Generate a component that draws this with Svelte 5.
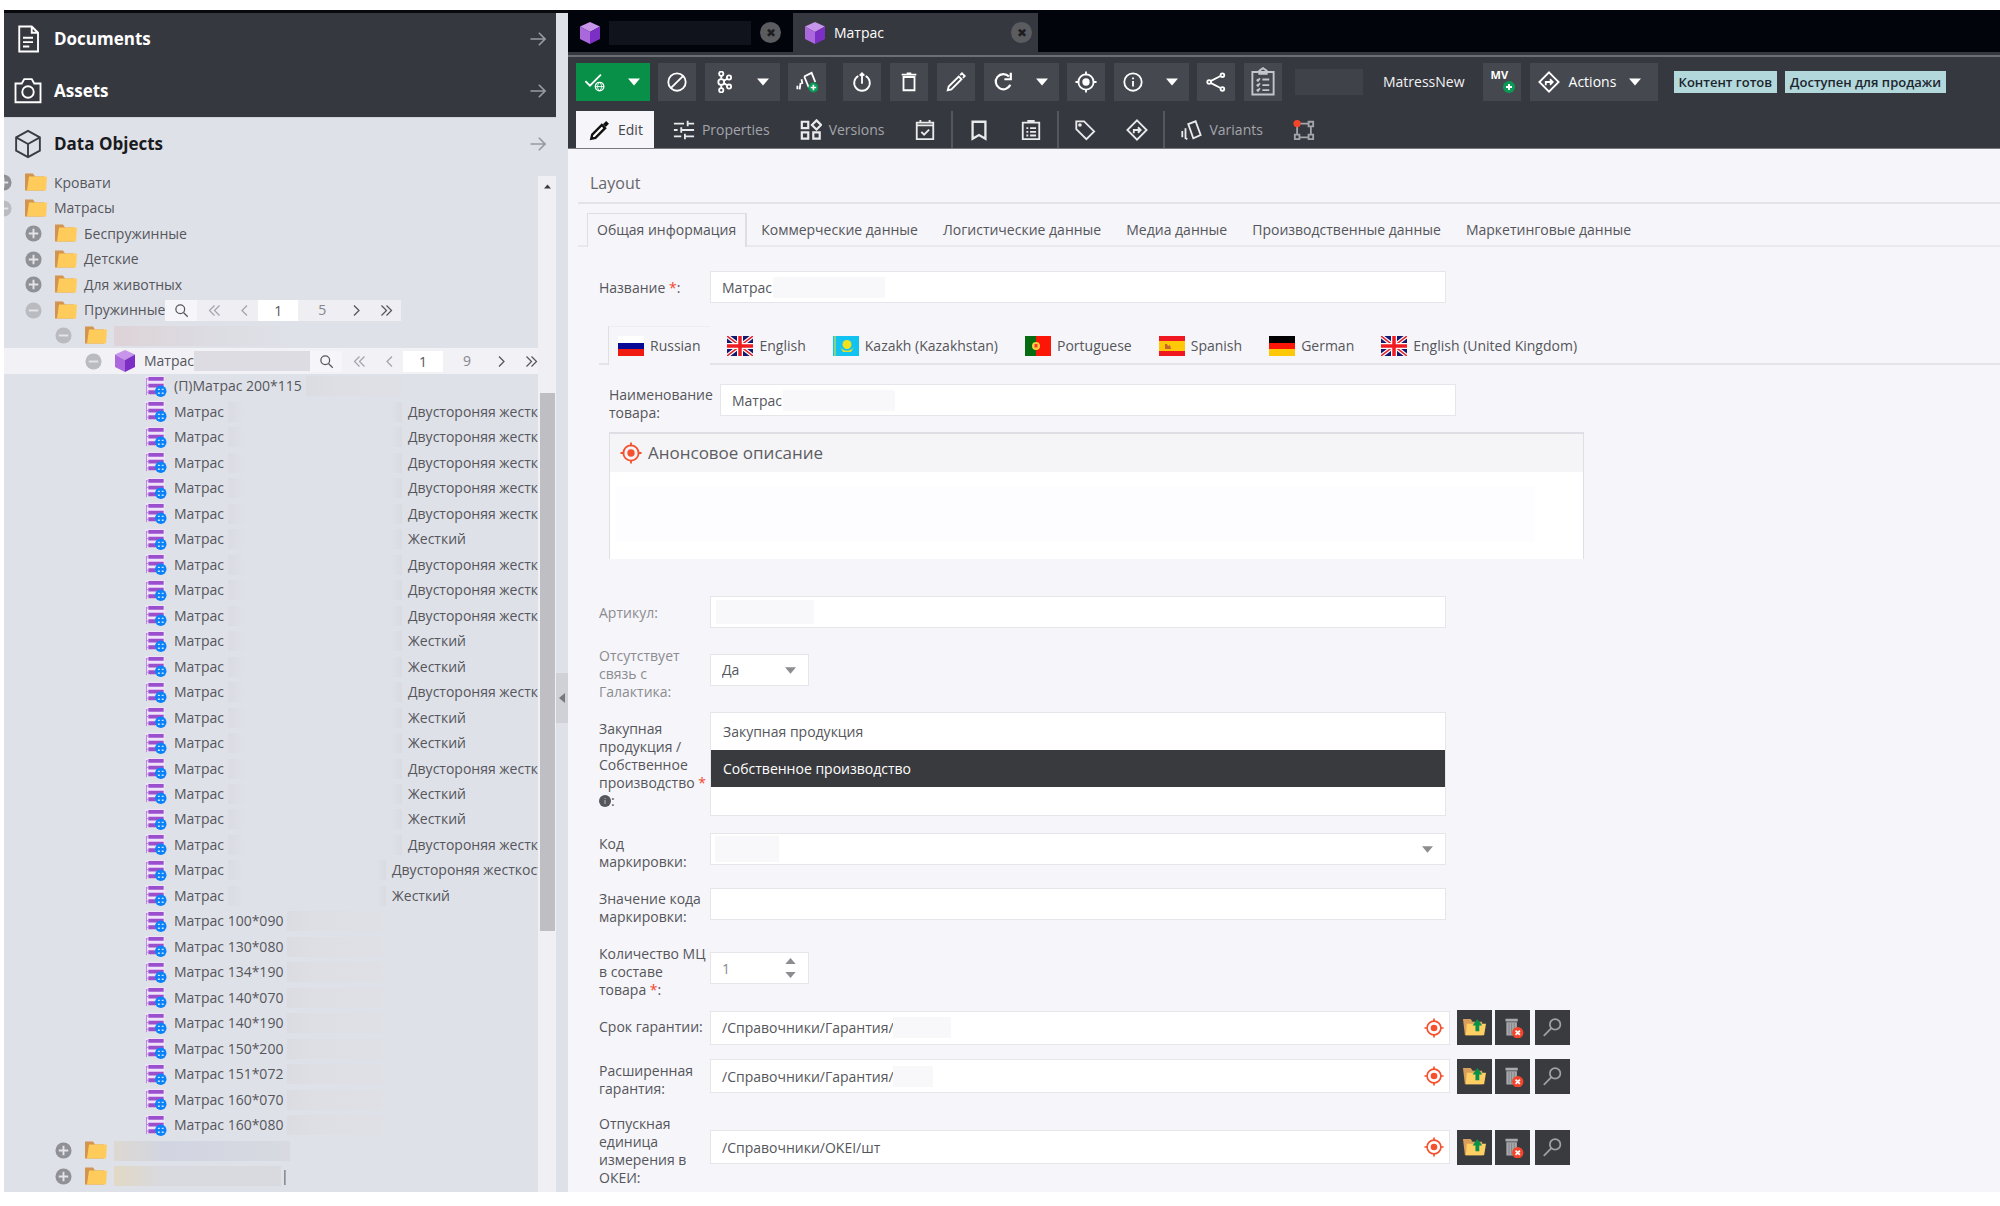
<script>
  const icons = {
    doc: '<path d="M5 2h10l5 5v15H5zM15 2v5h5M8 11h8M8 14.500h8M8 18h5" />',
    camera: '<path d="M2 6h5l2-3.500h6L17 6h5v15H2z"/><circle cx="12" cy="12.800" r="4.600"/>',
    cube: '<path d="M12 1.500l9.500 5.200v10.600L12 22.500l-9.500-5.200V6.700zM2.500 6.700L12 12l9.500-5.300M12 12v10.500"/>',
    arrow: '<path d="M3 12h17M13 4.500l7.500 7.500-7.500 7.500"/>',
    check: '<path d="M1.500 11l5 5L18.500 4"/><circle cx="17" cy="17" r="4.600" stroke-width="1.500"/><path d="M12.500 17h9M17 12.500c-3 3-3 6 0 9c3-3 3-6 0-9" stroke-width="1"/>',
    block: '<circle cx="12" cy="12" r="9.500"/><path d="M5.500 18.500l13-13"/>',
    kafka: '<circle cx="9" cy="12" r="3.200"/><circle cx="9" cy="3" r="2.300"/><circle cx="9" cy="21" r="2.300"/><circle cx="17.500" cy="7" r="2.300"/><circle cx="17.500" cy="17" r="2.300"/><path d="M9 5.500v3M9 15v3.500M12 10.500l3.500-2M12 13.500l3.500 2"/>',
    variantAdd: '<path d="M9 6l8-4 4 10M9 6l5 12M6 9l1 5M5 13l-1 7M1.500 16v4" /><circle cx="19" cy="18" r="5.500" fill="#0a9a55" stroke="none"/><path d="M19 15v6M16 18h6" stroke-width="1.800"/>',
    power: '<path d="M8 5.500a8.500 8.500 0 1 0 8 0" /><path d="M12 14V2.500M9.500 5L12 2.500 14.500 5"/>',
    trash: '<path d="M6 6.500h12V21H6zM4 4h16M9.500 2.500h5" />',
    pencil: '<path d="M3 21l1-4L15 6l3 3L7 20zM16.500 4.500l2-2 3 3-2 2"/>',
    pencilFill: '<path d="M2.500 21.500l1-4.500L14 6.500l3.500 3.500L7 20.500z" fill="#fff" stroke-width="2.600"/><path d="M17 4l3 3" stroke-width="5"/>',
    reload: '<path d="M18.500 6A8.300 8.300 0 1 0 20 15M20.500 2v7h-7" stroke-width="2.400"/>',
    target: '<circle cx="12" cy="12" r="8.300"/><circle cx="12" cy="12" r="4" fill="currentColor" stroke="none"/><path d="M12 .500v4M12 19.500v4M.500 12h4M19.500 12h4"/>',
    info: '<circle cx="12" cy="12" r="9.500"/><path d="M12 11v6M12 7v2"/>',
    share: '<circle cx="19" cy="4.500" r="2"/><circle cx="19" cy="19.500" r="2"/><circle cx="4.500" cy="12" r="2"/><path d="M6 11l11-5.500M6 13l11 5.500"/>',
    clip: '<path d="M3.500 4h17v18h-17zM9 5.500V3l3-2 3 2v2.500zM7 10l1 1 1.500-2M7 14l1 1 1.500-2M7 18l1 1 1.500-2M11.500 10H17M11.500 14.500H17M11.500 18.500H17"/>',
    route: '<path d="M12 1.500L22.500 12 12 22.500 1.500 12zM8.500 15.500V12h7M13 9l3 3-3 3"/>',
    tune: '<path d="M1 5h11M16 5h7M16 2v6M1 12h4M9 12h14M9 9v6M1 19h8M13 19h10M13 16v6"/>',
    widgets: '<path d="M2 3h7v7H2zM2 14.500h7v7H2zM14.500 14.500h7v7h-7zM18 1.500l5 5-5 5-5-5z" stroke-width="2.400"/>',
    calendar: '<path d="M3 4h18v18H3zM3 7h18M7 1v3M17 1v3M8 14l3 3 5.500-5.500"/>',
    bookmark: '<path d="M5 3h14v18.500l-7-4-7 4z" stroke-width="2.500"/>',
    clipboard: '<path d="M3 4h18v18H3zM9 4V2h6v2M7 10h2M11 10h6.500M7 14h2M11 14h6.500M7 18h2M11 18h6.500"/>',
    tag: '<path d="M2.500 2.500H11L22 13.500 13.500 22 2.500 11z"/><circle cx="6.500" cy="6.500" r="1"/>',
    variants: '<path d="M9 5.500L17 2.500l5.500 15L14.500 21zM6 10v11l2 1M2.500 13v7" />',
    nodes: '<path d="M7 5h10M7 20h10M4.500 7.500v10M19.500 7.500v10" /><path d="M17 3h5v5h-5zM17 17h5v5h-5zM2 17h5v5H2z"/><circle cx="4.500" cy="5" r="4" fill="#f4452b" stroke="none"/>',
    search: '<circle cx="10" cy="10" r="7"/><path d="M15.500 15.500L22 22"/>',
    searchLeft: '<circle cx="15" cy="8.500" r="6"/><path d="M10.500 13L2 21.500"/>',
    dleft: '<path d="M12 4l-8 8 8 8M20 4l-8 8 8 8"/>',
    left: '<path d="M16 4l-8 8 8 8"/>',
    right: '<path d="M8 4l8 8-8 8"/>',
    dright: '<path d="M4 4l8 8-8 8M12 4l8 8-8 8"/>',
  };

  const leaf = (name, tail = '', w = 234) => ({ level: 4, kind: 'leaf', name, tail, w });
  const two = 'Двустороняя жесткость';
  const hard = 'Жесткий';
  const rows = [
    { level: 0, kind: 'folder', exp: 'plus', name: 'Кровати' },
    { level: 0, kind: 'folder', exp: 'minus', name: 'Матрасы' },
    { level: 1, kind: 'folder', exp: 'plus', name: 'Беспружинные' },
    { level: 1, kind: 'folder', exp: 'plus', name: 'Детские' },
    { level: 1, kind: 'folder', exp: 'plus', name: 'Для животных' },
    { level: 1, kind: 'folder', exp: 'minus', name: 'Пружинные', pages: 5 },
    { level: 2, kind: 'folder', exp: 'minus', name: '', smudge: 'rose' },
    { level: 3, kind: 'cube', exp: 'minus', name: 'Матрас', pages: 9, selected: true },
    leaf('(П)Матрас 200*115'),
    ...[two, two, two, two, two, hard, two, two, two, hard, hard, two, hard, hard, two, hard, hard, two].map((t) => leaf('Матрас', t)),
    leaf('Матрас', two, 218),
    leaf('Матрас', hard, 218),
    ...['100*090', '130*080', '134*190', '140*070', '140*190', '150*200', '151*072', '160*070', '160*080'].map((s) => leaf('Матрас ' + s)),
    { level: 2, kind: 'folder', exp: 'plus', name: '', smudge: 'blue' },
    { level: 2, kind: 'folder', exp: 'plus', name: '', smudge: 'sand' },
  ];

  const formTabs = ['Общая информация', 'Коммерческие данные', 'Логистические данные', 'Медиа данные', 'Производственные данные', 'Маркетинговые данные'];

  const uk = '<path fill="#15186f" d="M0 0h26v20H0z"/><path d="M0 0l26 20M26 0L0 20" stroke="#fff" stroke-width="4"/><path d="M0 0l26 20M26 0L0 20" stroke="#e0242c" stroke-width="1.500"/><path d="M13 0v20M0 10h26" stroke="#fff" stroke-width="6"/><path d="M13 0v20M0 10h26" stroke="#f01c22" stroke-width="3.500"/>';
  const langs = [
    ['Russian', '<path fill="#fff" d="M0 0h26v7H0z"/><path fill="#060a96" d="M0 7h26v6H0z"/><path fill="#f01a10" d="M0 13h26v7H0z"/>'],
    ['English', uk],
    ['Kazakh (Kazakhstan)', '<path fill="#12c3f2" d="M0 0h26v20H0z"/><path fill="#7fd68a" d="M1 0h2v20H1z"/><circle cx="14" cy="8.500" r="4.500" fill="#f2e21c"/><path d="M7 11c4 5 10 5 14 0l-3 5h-8z" fill="#e6dc2a"/>'],
    ['Portuguese', '<path fill="#076b12" d="M0 0h11v20H0z"/><path fill="#fb1608" d="M11 0h15v20H11z"/><circle cx="11" cy="10" r="4" fill="#f3d33c"/><path fill="#f33" d="M9.500 8h3v3.500h-3z"/>'],
    ['Spanish', '<path fill="#f01820" d="M0 0h26v20H0z"/><path fill="#fec707" d="M0 5h26v10H0z"/><path fill="#c5662a" d="M6 8h2l1 2 2-1 1 4H6z"/>'],
    ['German', '<path d="M0 0h26v7H0z"/><path fill="#fb1608" d="M0 7h26v6H0z"/><path fill="#fec707" d="M0 13h26v7H0z"/>'],
    ['English (United Kingdom)', uk],
  ];
</script>

{#snippet icon(name, size = 'm')}
  <svg class="ico {size}" viewBox="0 0 24 24" aria-hidden="true">{@html icons[name]}</svg>
{/snippet}

{#snippet cube()}
  <svg class="cube" viewBox="0 0 20 22" aria-hidden="true">
    <path d="M10 0l10 4.500L10 10 0 4.500z" fill="#c795ea" /><path d="M0 4.500L10 10v12L0 17z" fill="#ab68dc" /><path d="M20 4.500L10 10v12l10-5z" fill="#7b2fc4" />
  </svg>
{/snippet}

{#snippet folder()}
  <svg class="rowicon" viewBox="0 0 22 20" aria-hidden="true">
    <path d="M0 1h8l2 3h9v14H0z" fill="#d2944e" /><path d="M4 4h18l-1 14H2z" fill="#ffcc5c" />
  </svg>
{/snippet}

{#snippet leafIcon()}
  <svg class="rowicon" viewBox="0 0 22 22" aria-hidden="true">
    <path d="M0 0h20v19H0z" fill="#efe2fa" /><path d="M3 1h16v4H3zM3 8h16v4H3zM3 15h16v4H3z" fill="#9a50cc" /><path d="M1 2v18M1 3h2M1 10h2M1 17h2" stroke="#b582dc" />
    <circle cx="16" cy="16" r="6" fill="#0a83fa" /><path d="M13 14h2M17 14h2M13 18h2M17 18h2" stroke="#cfe6ff" stroke-width="1.500" />
  </svg>
{/snippet}

{#snippet caret(up = false)}
  <svg class="caret" viewBox="0 0 12 7" aria-hidden="true"><path d={up ? 'M0 7h12L6 0z' : 'M0 0h12L6 7z'} fill="currentColor" /></svg>
{/snippet}

{#snippet tool(name, label)}
  <button class="tool" aria-label={label}>{@render icon(name)}</button>
{/snippet}

{#snippet split(name, label)}
  <div class="split">
    <button class="tool" aria-label={label}>{@render icon(name)}</button>
    <button class="drop" aria-label="{label} menu">{@render caret()}</button>
  </div>
{/snippet}

{#snippet relation(id, label, value, smudge)}
  <div class="field">
    <label for={id}>{label}</label>
    <div class="relation">
      <div class="refbox">
        <input {id} {value} />
        {#if smudge}<span class="smudge {smudge}"></span>{/if}
        <span class="red">{@render icon('target', 's')}</span>
      </div>
      <button type="button" class="sq" aria-label="Open">
        <svg viewBox="0 0 24 20" aria-hidden="true"><path d="M0 1h8l2 3h10v14H2z" fill="#d9a05c" /><path d="M4 6h20l-2 12H3z" fill="#ffcf63" /><path d="M13 14V8h-3l5-7 5 7h-3v6z" fill="#07914a" /></svg>
      </button>
      <button type="button" class="sq" aria-label="Delete">
        <svg viewBox="0 0 24 24" aria-hidden="true"><path d="M4 2h14v3H4zM5 6h12v15H5z" fill="#a9aaad" /><path d="M8 7v13M11 7v13M14 7v13" stroke="#7c7d81" /><circle cx="18" cy="18" r="6.500" fill="#f5462c" /><path d="M15.500 15.500l5 5M20.500 15.500l-5 5" stroke="#fff" stroke-width="2" /></svg>
      </button>
      <button type="button" class="sq last" aria-label="Search">{@render icon('searchLeft')}</button>
    </div>
  </div>
{/snippet}

<div class="app">
  <aside class="sidebar">
    <button class="section">{@render icon('doc', 'l')}<span>Documents</span>{@render icon('arrow', 'a')}</button>
    <button class="section">{@render icon('camera', 'l')}<span>Assets</span>{@render icon('arrow', 'a')}</button>
    <button class="section light">{@render icon('cube', 'l')}<span>Data Objects</span>{@render icon('arrow', 'a')}</button>
    <div class="treewrap">
      <div class="tree">
        {#each rows as r}
          <div class="row" class:selected={r.selected}>
            <span class="indent" style="margin-left: {r.level * 30 - 9}px">
              {#if r.exp}
                <svg class="exp {r.exp}" viewBox="0 0 18 18" aria-hidden="true">
                  <circle cx="9" cy="9" r="8.500" fill="currentColor" /><path d={r.exp === 'plus' ? 'M9 4v10M4 9h10' : 'M4 9h10'} stroke="#e4e4ea" stroke-width="2" />
                </svg>
              {/if}
            </span>
            <span class="kind">
              {#if r.kind === 'folder'}{@render folder()}{:else if r.kind === 'cube'}{@render cube()}{:else}{@render leafIcon()}{/if}
            </span>
            {#if r.tail}
              <span class="name" style="width: {r.w}px">{r.name}<i class="veil"></i></span><span>{r.tail}</span>
            {:else}
              <span>{r.name}</span>
            {/if}
            {#if r.smudge}<span class="rowsmudge {r.smudge}"></span>{/if}
            {#if r.smudge === 'sand'}<span class="bar">|</span>{/if}
            {#if r.kind === 'leaf' && !r.tail}<span class="fade"></span>{/if}
            {#if r.selected}<span class="selsmudge"></span>{/if}
            {#if r.pages}
              <div class="pager">
                <button class="find" aria-label="Search">{@render icon('search', 'p')}</button>
                <button class="first dim" aria-label="First">{@render icon('dleft', 'p')}</button>
                <button class="prev dim" aria-label="Previous">{@render icon('left', 'p')}</button>
                <input value="1" aria-label="Page" />
                <span class="total">{r.pages}</span>
                <button class="next" aria-label="Next">{@render icon('right', 'p')}</button>
                <button class="lastp" aria-label="Last">{@render icon('dright', 'p')}</button>
              </div>
            {/if}
          </div>
        {/each}
      </div>
      <div class="scroll"><span class="up">{@render caret(true)}</span><span class="thumb"></span></div>
    </div>
  </aside>

  <div class="splitter"><button aria-label="Collapse"><svg viewBox="0 0 6 10"><path d="M6 0v10L0 5z" fill="#77797f" /></svg></button></div>

  <main>
    <header>
      <div class="doctabs">
        <div class="doctab">{@render cube()}<span class="title hidden"></span><button aria-label="Close">✖</button></div>
        <div class="doctab on">{@render cube()}<span class="title">Матрас</span><button aria-label="Close">✖</button></div>
      </div>
      <div class="toolbar">
        <div class="split green">
          <button class="tool" aria-label="Save and publish">{@render icon('check')}</button>
          <button class="drop" aria-label="Save menu">{@render caret()}</button>
        </div>
        {@render tool('block', 'Unpublish')}
        {@render split('kafka', 'Send')}
        {@render tool('variantAdd', 'Add variant')}
        <span class="space"></span>
        {@render tool('power', 'Queue')}
        {@render tool('trash', 'Delete')}
        {@render tool('pencil', 'Rename')}
        {@render split('reload', 'Reload')}
        {@render tool('target', 'Locate')}
        {@render split('info', 'Info')}
        {@render tool('share', 'Share')}
        <button class="tool thin" aria-label="Checklist">{@render icon('clip', 'l')}</button>
        <span class="idsmudge"></span>
        <span class="cls">MatressNew</span>
        <button class="tool mv" aria-label="Add MV"><b>MV</b><svg viewBox="0 0 12 12"><circle cx="6" cy="6" r="6" fill="#0a9a55" /><path d="M6 3v6M3 6h6" stroke="#fff" stroke-width="2" /></svg></button>
        <button class="actions">{@render icon('route')}<span>Actions</span>{@render caret()}</button>
        <span class="badge lead">Контент готов</span>
        <span class="badge">Доступен для продажи</span>
      </div>
      <nav class="tabs">
        <button class="tab on">{@render icon('pencilFill')}<span>Edit</span></button>
        <button class="tab">{@render icon('tune')}<span>Properties</span></button>
        <button class="tab">{@render icon('widgets')}<span>Versions</span></button>
        <button class="tab" aria-label="Schedule">{@render icon('calendar')}</button>
        <span class="sep"></span>
        <button class="tab" aria-label="Bookmark">{@render icon('bookmark')}</button>
        <button class="tab" aria-label="Tasks">{@render icon('clipboard')}</button>
        <span class="sep"></span>
        <button class="tab" aria-label="Tags">{@render icon('tag')}</button>
        <button class="tab" aria-label="Workflow">{@render icon('route')}</button>
        <span class="sep"></span>
        <button class="tab">{@render icon('variants')}<span>Variants</span></button>
        <button class="tab grey" aria-label="Relations">{@render icon('nodes')}</button>
      </nav>
    </header>

    <div class="content">
      <h2>Layout</h2>
      <div class="formtabs">
        {#each formTabs as t, i}<button class:on={i === 0}>{t}</button>{/each}
      </div>
      <form>
        <div class="field">
          <label for="title">Название <em>*</em>:</label>
          <div class="box"><input id="title" value="Матрас" /><span class="smudge title"></span></div>
        </div>
        <div class="langs">
          {#each langs as [name, art], i}
            <button type="button" class:on={i === 0}><svg class="flag" viewBox="0 0 26 20" aria-hidden="true">{@html art}</svg>{name}</button>
          {/each}
        </div>
        <div class="localized">
          <div class="field">
            <label for="pname">Наименование товара:</label>
            <div class="box"><input id="pname" value="Матрас" /><span class="smudge title"></span></div>
          </div>
          <section class="panel">
            <h3><span class="red">{@render icon('target')}</span>Анонсовое описание</h3>
            <div class="rich"><div></div></div>
          </section>
        </div>
        <div class="fields">
          <div class="field muted">
            <label for="sku">Артикул:</label>
            <div class="box"><input id="sku" /><span class="smudge sku"></span></div>
          </div>
          <div class="field muted">
            <label for="link">Отсутствует связь с Галактика:</label>
            <div class="box small"><select id="link"><option>Да</option></select><span class="selcaret">{@render caret()}</span></div>
          </div>
          <div class="field">
            <label for="origin">Закупная продукция / Собственное производство&nbsp;<em>*</em> <svg class="dot" viewBox="0 0 12 12"><circle cx="6" cy="6" r="6" fill="#55565b" /><path d="M6 5v4M6 3v1" stroke="#bbb" /></svg>:</label>
            <div class="list" id="origin" role="listbox" tabindex="0">
              <div role="option" aria-selected="false">Закупная продукция</div>
              <div role="option" aria-selected="true" class="sel">Собственное производство</div>
            </div>
          </div>
          <div class="field">
            <label for="code">Код маркировки:</label>
            <div class="box"><select id="code"><option></option></select><span class="smudge code"></span><span class="selcaret">{@render caret()}</span></div>
          </div>
          <div class="field">
            <label for="codeval">Значение кода маркировки:</label>
            <div class="box"><input id="codeval" /></div>
          </div>
          <div class="field">
            <label for="qty">Количество МЦ в составе товара&nbsp;<em>*</em>:</label>
            <div class="box small"><input id="qty" value="1" class="qty" /><span class="spin">{@render caret(true)}{@render caret()}</span></div>
          </div>
          <div class="relations">
            {@render relation('warranty', 'Срок гарантии:', '/Справочники/Гарантия/', 'w1')}
            {@render relation('warranty2', 'Расширенная гарантия:', '/Справочники/Гарантия/', 'w2')}
            {@render relation('unit', 'Отпускная единица измерения в ОКЕИ:', '/Справочники/OKEI/шт', '')}
          </div>
        </div>
      </form>
    </div>
  </main>
</div>

<style>
  :global(body) { background: #fff; }
  .app, .app * { box-sizing: border-box; }
  .app { display: flex; min-height: 100vh; padding: 10px 0 14px 4px; font: 14px/18px "Open Sans", "Noto Sans", sans-serif; color: #55565b; }
  button { font: inherit; color: inherit; background: none; border: 0; padding: 0; margin: 0; display: flex; align-items: center; justify-content: center; white-space: nowrap; }
  input, select { font: inherit; color: #55565b; border: 0; background: none; margin: 0; outline: 0; appearance: none; }

  .ico { width: 22px; height: 22px; fill: none; stroke: currentColor; stroke-width: 2; flex: none; }
  .ico.s { width: 20px; height: 20px; }
  .ico.l { width: 30px; height: 32px; stroke-width: 1.5; }
  .ico.a { width: 20px; height: 20px; stroke-width: 2; color: #989aa0; margin-left: auto; }
  .ico.p { width: 15px; height: 15px; stroke-width: 2; }
  .caret { width: 12px; height: 8px; flex: none; }
  .cube { width: 20px; height: 22px; flex: none; }

  .sidebar { width: 552px; flex: none; display: flex; flex-direction: column; background: #dfe1e8; border-top: 3px solid #08090d; }
  .section { height: 52px; flex: none; background: #36383f; color: #fff; font-weight: 700; font-size: 17px; padding: 0 8px 0 9px; gap: 11px; justify-content: flex-start; }
  .section.light { background: none; color: #1a1b20; border-top: 1px solid #cfd2d8; }
  .section.light .ico.l { color: #3a3c42; }
  .treewrap { flex: 1; display: flex; }
  .tree { flex: 1; min-width: 0; overflow: hidden; display: flex; flex-direction: column; padding: 1px 0 3px; }
  .row { flex: 1; min-height: 25px; display: flex; align-items: center; white-space: nowrap; }
  .row.selected { background: #f1f1f6; }
  .indent { width: 30px; flex: none; display: flex; }
  .kind { width: 29px; flex: none; display: flex; align-items: center; }
  .rowicon { width: 22px; height: 21px; }
  .exp { width: 17px; height: 17px; color: #8f9196; }
  .exp.minus { color: #b9bbc0; }
  .name { flex: none; display: flex; align-items: center; }
  .veil { flex: 1; height: 20px; margin: 0 6px 0 4px; background: linear-gradient(90deg, #dadce2, #dfe1e8 10%, #dfe1e8 94%, #d9dbe1); }
  .fade { width: 96px; height: 20px; margin-left: 4px; background: linear-gradient(90deg, #dadce2, #dddfe5 30%, #dee0e6); }
  .rowsmudge { width: 176px; height: 20px; background: #d8dae0; }
  .rowsmudge.rose { background: linear-gradient(90deg, #ddd3d8, #dcdde3 60%, #dfe1e8); }
  .rowsmudge.blue { background: linear-gradient(90deg, #ddd8d2, #d1d5e2 30%, #d8dae0); }
  .rowsmudge.sand { width: 167px; background: linear-gradient(90deg, #e2d8c4, #d8dae0 30%); }
  .selsmudge { width: 116px; height: 20px; background: #dcdce2; flex: none; }
  .pager { display: flex; flex: none; align-items: center; height: 21px; background: #eeeef3; }
  .pager > * { flex: none; }
  .selected .pager { background: none; }
  .find { width: 32px; height: 21px; background: #f6f6fa; }
  .first { width: 34px; }
  .prev { width: 27px; }
  .next { width: 29px; }
  .lastp { width: 30px; }
  .dim { color: #a4a5ab; }
  .pager input { width: 40px; height: 21px; text-align: center; background: #fff; padding: 0; }
  .total { width: 40px; margin-left: 4px; text-align: center; color: #85868c; }
  .scroll { width: 18px; flex: none; margin-top: 7px; background: #f0f0f4; display: flex; flex-direction: column; align-items: center; }
  .up { height: 20px; display: flex; align-items: center; color: #3b3c40; }
  .up .caret { width: 7px; height: 5px; }
  .thumb { width: 15px; height: 53%; margin-top: 197px; background: #bfbfc3; }

  .splitter { width: 12px; flex: none; background: #dfe1e8; border-top: 3px solid #08090d; display: flex; align-items: center; }
  .splitter button { width: 12px; height: 50px; margin-top: 190px; background: #cfd1d7; }
  .splitter svg { width: 6px; height: 10px; }

  main { flex: 1; min-width: 0; background: #f6f5f9; }
  header { background: #36383f; border-bottom: 1px solid #77797f; }
  .doctabs { height: 42px; background: #02040c; display: flex; padding-top: 3px; }
  .doctab { width: 225px; display: flex; align-items: center; padding: 0 12px; gap: 9px; color: #fff; }
  .doctab.on { width: 245px; background: #36383f; padding-right: 6px; }
  .doctab button { width: 21px; height: 21px; border-radius: 50%; background: #5b5c60; color: #1d1e22; font-size: 12px; margin-left: auto; }
  .title.hidden { width: 142px; height: 24px; background: #10131b; }
  .toolbar { border-top: 2px solid #6b6e75; margin-top: 3px; display: flex; align-items: center; gap: 8px; padding: 6px 8px 10px; color: #fff; }
  .tool { width: 38px; height: 38px; background: #45484f; flex: none; margin-right: 1px; }
  .split { width: 75px; flex: none; display: flex; background: #45484f; }
  .split .tool { margin: 0; }
  .drop { flex: 1; height: 38px; padding-left: 3px; }
  .green { width: 74px; }
  .green, .green .tool { background: #089048; }
  .thin { color: #c4c6cb; }
  .space { width: 0; }
  .idsmudge { width: 68px; height: 26px; margin-left: 4px; background: #3f4249; }
  .cls { margin: 0 10px 0 12px; color: #f2f2f4; }
  .mv { flex-direction: column; align-items: flex-start; padding: 0 0 2px 8px; font-size: 11px; line-height: 12px; }
  .mv svg { width: 12px; height: 12px; margin-left: 12px; }
  .actions { width: 128px; height: 38px; background: #45484f; gap: 9px; flex: none; justify-content: flex-start; padding-left: 8px; }
  .actions .caret { margin-left: 4px; }
  .badge { height: 22px; line-height: 22px; padding: 0 5px; background: #b2d8dc; color: #20242c; font-weight: 600; font-size: 13px; flex: none; white-space: nowrap; }
  .badge.lead { margin-left: 8px; }
  .tabs { display: flex; height: 37px; padding-left: 8px; color: #e9eaec; }
  .tab { padding: 0 15px; gap: 7px; }
  .tab span { color: #a3a5ab; }
  .tab.on { background: #f6f5f9; color: #111; padding: 0 11px 0 13px; margin-right: 4px; }
  .tab.on span { color: #44454b; }
  .tab.grey { color: #a3a5ab; }
  .sep { width: 2px; background: #54575e; }

  .content { padding-left: 10px; }
  h2 { margin: 0; font-weight: 400; font-size: 16px; line-height: 22px; padding: 23px 12px 8px; border-bottom: 2px solid #e4e3e8; color: #66676c; }
  .formtabs { display: flex; gap: 3px; margin-top: 9px; padding-left: 9px; height: 34px; border-bottom: 2px solid #e9e8ed; }
  .formtabs button { height: 32px; padding: 0 10px; border: solid transparent; border-width: 1px 1px 0; }
  .formtabs button.on { height: 34px; padding: 0 9px 2px; background: #f6f5f9; border-color: #dfdee4; border-right-width: 2px; }
  form { padding: 24px 0 0 21px; }
  .field { display: grid; grid-template-columns: 111px 736px; }
  label { padding: 8px 2px 0 0; }
  em { color: #f4452b; font-style: normal; }
  .muted label { color: #8b8c91; }
  .box, .refbox, .list { align-self: center; background: #fff; border: 1px solid #e6e5ea; display: flex; align-items: center; height: 32px; position: relative; }
  .box input, .box select, .refbox input { flex: 1; width: 100%; height: 100%; padding: 0 11px; }
  .small { width: 99px; }
  .box select { padding-right: 20px; }
  .selcaret, .spin, .refbox .red { position: absolute; right: 12px; color: #8c8d91; display: flex; }
  .selcaret .caret { width: 11px; height: 7px; }
  .red { color: #f4512f; display: flex; }
  .refbox .red { right: 5px; color: #f4512f; }
  .spin { flex-direction: column; gap: 8px; }
  .spin .caret { height: 6px; width: 11px; }
  .qty { color: #88898e; }
  .smudge { position: absolute; height: 21px; background: #f8f7fa; left: 62px; }
  .smudge.title { width: 112px; }
  .smudge.sku { left: 5px; width: 98px; height: 24px; }
  .smudge.code { left: 4px; width: 64px; height: 26px; }
  .smudge.w1 { left: 182px; width: 58px; }
  .smudge.w2 { left: 182px; width: 40px; }
  .langs { display: flex; margin: 23px 0 0; padding-left: 9px; height: 39px; border-bottom: 2px solid #e4e3e8; gap: 7px; }
  .langs button { height: 38px; padding: 0 10px; gap: 6px; border-top: 1px solid transparent; }
  .langs button.on { height: 39px; padding: 0 10px 1px 9px; background: #f6f5f9; border-top-color: #eeedf2; border-left: 1px solid #dfdee4; }
  .flag { width: 26px; height: 20px; flex: none; }
  .localized { padding: 13px 0 0 10px; }
  .panel { width: 975px; margin-top: 10px; border: solid #dfdee4; border-width: 2px 1px 0; }
  h3 { margin: 0; height: 38px; display: flex; align-items: center; gap: 6px; padding-left: 10px; font-weight: 400; font-size: 17px; background: #f5f4f7; color: #5c5d62; }
  .rich { height: 87px; background: #fff; padding: 15px 48px 15px 6px; }
  .rich div { height: 54px; background: #fdfcfe; }
  .fields { display: flex; flex-direction: column; gap: 11px; margin-top: 37px; }
  .relations { display: flex; flex-direction: column; gap: 9px; }
  .list { height: 104px; display: block; }
  .list div { height: 37px; line-height: 37px; padding: 0 12px; }
  .list .sel { background: #393a3e; color: #fff; }
  .dot { width: 12px; height: 12px; vertical-align: -1px; }
  .relation { display: flex; align-items: center; align-self: center; width: 863px; }
  .refbox { width: 741px; height: 34px; margin-right: 7px; }
  .sq { width: 35px; height: 35px; background: #3a3b3f; margin-right: 3px; color: #a0a1a5; }
  .sq.last { margin-left: 2px; }
  .sq svg { width: 23px; height: 21px; }
</style>
